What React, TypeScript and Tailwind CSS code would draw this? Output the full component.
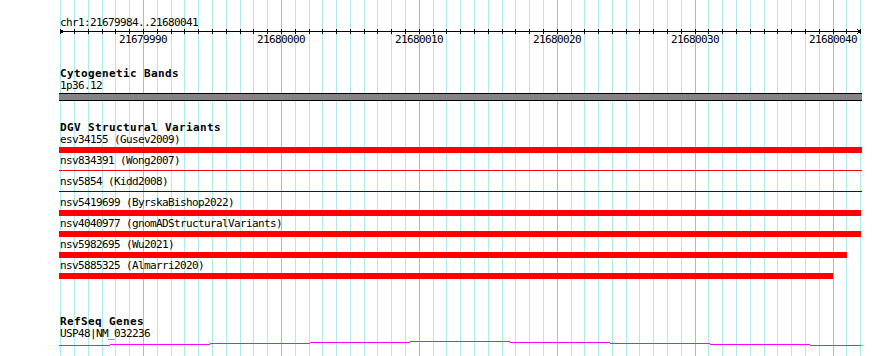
const MONO = "font-['DejaVu_Sans_Mono','Liberation_Mono',monospace]";

const START_BP = 21679984;
const gridXs = Array.from({ length: 59 }, (_, i) => ({
  x: Math.round(60.3 + 13.79 * i),
  major: (START_BP + i) % 10 === 0,
  bp: START_BP + i,
}));

const variants = [
  { label: "esv34155 (Gusev2009)", kind: "bar", width: 803, color: "#ff0000" },
  { label: "nsv834391 (Wong2007)", kind: "line", width: 803, color: "#ff0000" },
  { label: "nsv5854 (Kidd2008)", kind: "line", width: 803, color: "#0000cc" },
  { label: "nsv5419699 (ByrskaBishop2022)", kind: "bar", width: 802, color: "#ff0000" },
  { label: "nsv4040977 (gnomADStructuralVariants)", kind: "bar", width: 802, color: "#ff0000" },
  { label: "nsv5982695 (Wu2021)", kind: "bar", width: 788, color: "#ff0000" },
  { label: "nsv5885325 (Almarri2020)", kind: "bar", width: 774, color: "#ff0000" },
];

// intron hat: [x0, x1, y] in track coords
const geneSegments: [number, number, number][] = [
  [0, 51, 5],
  [51, 151, 4],
  [151, 251, 3],
  [251, 351, 2],
  [351, 451, 1],
  [451, 551, 2],
  [551, 651, 3],
  [651, 751, 4],
  [751, 802, 5],
];

export default function App() {
  return (
    <div className="relative h-[356px] w-[890px] overflow-hidden bg-white text-black">
      <Grid />
      <div className={`relative flex w-[863px] flex-col pl-[59px] pt-[17px] ${MONO}`}>
        <div className="h-[11px] whitespace-pre pl-px text-[11px] leading-[11px] tracking-[-0.62px]">
          chr1:21679984..21680041
        </div>
        <Ruler />
        <TrackTitle>Cytogenetic Bands</TrackTitle>
        <Label>1p36.12</Label>
        <div className="mt-px h-[8px] w-[803px] border-y border-black bg-[#848484]" />
        <TrackTitle className="mt-[21px]">DGV Structural Variants</TrackTitle>
        {variants.map((v) => (
          <div key={v.label} className="flex h-[21px] flex-col">
            <Label>{v.label}</Label>
            <div className="mt-px h-[6px]">
              {v.kind === "bar" ? (
                <div className="h-[6px]" style={{ width: v.width, backgroundColor: v.color }} />
              ) : (
                <div className="mt-[2px] h-px" style={{ width: v.width, backgroundColor: v.color }} />
              )}
            </div>
          </div>
        ))}
        <TrackTitle className="mt-[35px]">RefSeq Genes</TrackTitle>
        <Label>USP48|NM_032236</Label>
        <svg width="803" height="6" shapeRendering="crispEdges">
          {geneSegments.map(([x0, x1, y]) => (
            <rect key={x0} x={x0} y={y} width={x1 - x0} height={1} fill="#ff00ff" />
          ))}
        </svg>
      </div>
    </div>
  );
}

function Grid() {
  return (
    <svg className="absolute left-0 top-0" width="890" height="356" shapeRendering="crispEdges">
      {gridXs.map((g) => (
        <rect key={g.bp} x={g.x} y={0} width={1} height={356} fill={g.major ? "#88c6f2" : "#aeeaee"} />
      ))}
    </svg>
  );
}

function Ruler() {
  return (
    <div className="relative h-[40px] w-[803px]">
      <svg width="803" height="8" shapeRendering="crispEdges">
        <rect x={1} y={3} width={801} height={1} fill="#000" />
        {gridXs.map((g) => (
          <rect key={g.bp} x={g.x - 59} y={1} width={1} height={5} fill="#000" />
        ))}
        <path d="M4.5 1.5 L1.5 3.5 L4.5 5.5" stroke="#000" fill="none" />
        <path d="M798.5 1.5 L801.5 3.5 L798.5 5.5" stroke="#000" fill="none" />
      </svg>
      {gridXs
        .filter((g) => g.major)
        .map((g) => (
          <span
            key={g.bp}
            className="absolute top-[6px] text-[11px] leading-[12px] tracking-[-0.62px]"
            style={{ left: g.x - 59 - 24 }}
          >
            {g.bp}
          </span>
        ))}
    </div>
  );
}

function TrackTitle(props: { children: React.ReactNode; className?: string }) {
  return (
    <div className={`h-[12px] whitespace-pre pl-px text-[11px] font-bold leading-[12px] tracking-[0.38px] ${props.className ?? ""}`}>
      {props.children}
    </div>
  );
}

function Label(props: { children: React.ReactNode }) {
  return (
    <div className="h-[12px] whitespace-pre pl-px text-[11px] leading-[12px] tracking-[-0.62px]">{props.children}</div>
  );
}
